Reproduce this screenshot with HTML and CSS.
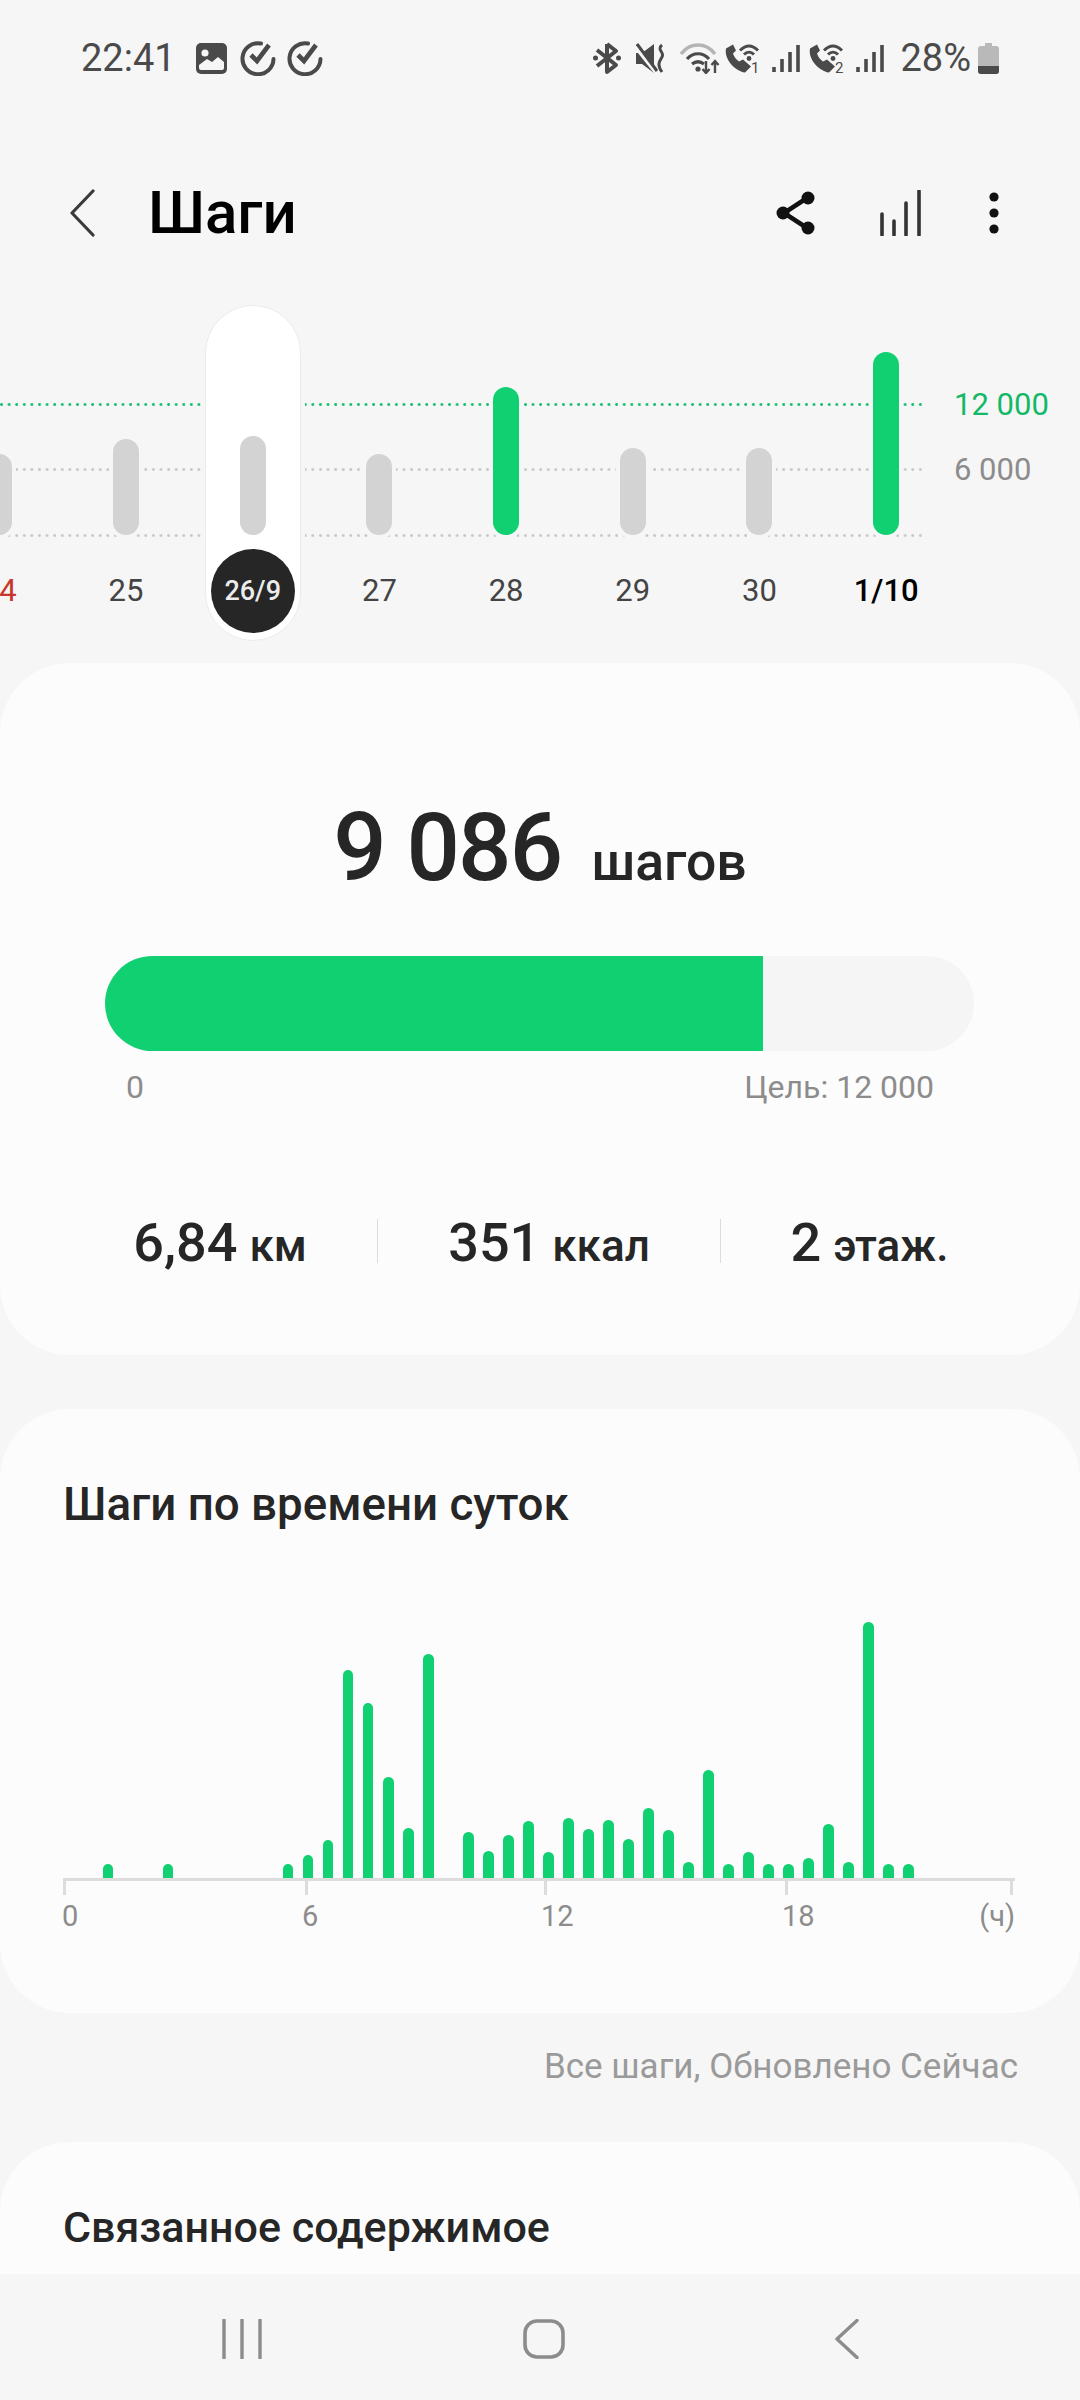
FILE: index.html
```html
<!DOCTYPE html>
<html lang="ru">
<head>
<meta charset="utf-8">
<title>Шаги</title>
<link rel="stylesheet" href="styles.css">
</head>
<body>
<div class="app">
  <div class="status">
    <span class="clock">22:41</span>
    <svg class="si si-img" viewBox="0 0 31 31"><rect x="0" y="0" width="31" height="31" rx="5" fill="#4a4a4a"/><circle cx="9" cy="10" r="3.6" fill="#f6f6f6"/><path d="M3 25v-3l8-6 5 3 6-5 6 5v6a2 2 0 0 1-2 2H5a2 2 0 0 1-2-2z" fill="#f6f6f6"/></svg>
    <svg class="si si-chk" viewBox="0 0 36 36"><path d="M21 3.500A15.500 15.500 0 1 0 33.500 19" fill="none" stroke="#4a4a4a" stroke-width="4" stroke-linecap="round"/><path d="M11 15l6 6L29 5" fill="none" stroke="#4a4a4a" stroke-width="4.600"/></svg>
    <svg class="si si-chk" viewBox="0 0 36 36"><path d="M21 3.500A15.500 15.500 0 1 0 33.500 19" fill="none" stroke="#4a4a4a" stroke-width="4" stroke-linecap="round"/><path d="M11 15l6 6L29 5" fill="none" stroke="#4a4a4a" stroke-width="4.600"/></svg>
    <span class="status-gap"></span>
    <svg class="si si-bt" viewBox="0 0 28 32"><path d="M14 2v28l9-7L4 8M14 2l9 7L4 24" fill="none" stroke="#4a4a4a" stroke-width="4" stroke-linejoin="round"/><circle cx="2.500" cy="16" r="2.500" fill="#4a4a4a"/><circle cx="25.500" cy="16" r="2.500" fill="#4a4a4a"/></svg>
    <svg class="si si-mute" viewBox="0 0 29 31"><path d="M0 10h6l12-9v29L6 21H0z" fill="#4a4a4a"/><path d="M0 4l20 25" stroke="#f6f6f6" stroke-width="4.500"/><path d="M1 1l20 27" stroke="#4a4a4a" stroke-width="3"/><path d="M26 2c-6 5 3 7 0 12s-5 8 0 15" fill="none" stroke="#4a4a4a" stroke-width="3"/></svg>
    <svg class="si si-wifi" viewBox="0 0 40 31"><path d="M1 11C10 -1 26 -1 35 11" fill="none" stroke="#b5b5b5" stroke-width="3.400"/><path d="M7 16C13 9 23 9 29 16M12 21c4-3 8-3 12 0" fill="none" stroke="#4a4a4a" stroke-width="3.200"/><circle cx="18" cy="26" r="2.600" fill="#4a4a4a"/><path d="M26 18v12M22.500 26l3.500 4 3.500-4M35 30V18M31.500 22l3.500-4 3.500 4" fill="none" stroke="#4a4a4a" stroke-width="2.400"/></svg>
    <svg class="si si-call" viewBox="0 -2.500 36 36"><path d="M8 2L1 6c-2 10 8 22 19 24l6-6-8-7-4 2c-3-2-5-5-6-8l3-3z" fill="#4a4a4a"/><path d="M15 8c6-6 12-6 18 0M19 12c3-3 7-3 10 0" fill="none" stroke="#4a4a4a" stroke-width="3"/><circle cx="24" cy="16" r="2.400" fill="#4a4a4a"/><text class="sim" x="26" y="30">1</text></svg>
    <svg class="si si-sig" viewBox="0 0 28 29"><path d="M2 23v5M10 15v13M18 8v20M26 1v27" fill="none" stroke="#4a4a4a" stroke-width="3.600"/></svg>
    <svg class="si si-call si-call2" viewBox="0 -2.500 36 36"><path d="M8 2L1 6c-2 10 8 22 19 24l6-6-8-7-4 2c-3-2-5-5-6-8l3-3z" fill="#4a4a4a"/><path d="M15 8c6-6 12-6 18 0M19 12c3-3 7-3 10 0" fill="none" stroke="#4a4a4a" stroke-width="3"/><circle cx="24" cy="16" r="2.400" fill="#4a4a4a"/><text class="sim" x="26" y="30">2</text></svg>
    <svg class="si si-sig si-sig2" viewBox="0 0 28 29"><path d="M2 23v5M10 15v13M18 8v20M26 1v27" fill="none" stroke="#4a4a4a" stroke-width="3.600"/></svg>
    <span class="pct">28%</span>
    <svg class="si si-batt" viewBox="0 0 21 31"><path d="M7 0h7v3h4a3 3 0 0 1 3 3v22a3 3 0 0 1-3 3H3a3 3 0 0 1-3-3V6a3 3 0 0 1 3-3h4z" fill="#b9b9b9"/><path d="M0 23h21v5a3 3 0 0 1-3 3H3a3 3 0 0 1-3-3z" fill="#4a4a4a"/></svg>
  </div>

  <div class="appbar">
    <svg class="back" viewBox="0 0 26 48"><path d="M24 2L3 24l21 22" fill="none" stroke="#3a3a3a" stroke-width="3.200" stroke-linecap="round" stroke-linejoin="round"/></svg>
    <h1 class="title">Шаги</h1>
    <span class="bar-gap"></span>
    <svg class="act act-share" viewBox="0 0 40 44"><path d="M31 7L8 22l23 15" fill="none" stroke="#111" stroke-width="4.500"/><circle cx="32" cy="7" r="6.500" fill="#111"/><circle cx="7" cy="22" r="6.500" fill="#111"/><circle cx="32" cy="37" r="6.500" fill="#111"/></svg>
    <svg class="act act-sig" viewBox="0 0 42 46"><path d="M3 24v21M15 31v14M27 13v32M40 1v44" fill="none" stroke="#333" stroke-width="3.600" stroke-linecap="round"/></svg>
    <svg class="act act-more" viewBox="0 0 12 44"><circle cx="6" cy="6" r="4.600" fill="#111"/><circle cx="6" cy="22" r="4.600" fill="#111"/><circle cx="6" cy="38" r="4.600" fill="#111"/></svg>
  </div>

  <main class="scroll">
    <section class="week">
      <div class="guide guide-goal"><span class="guide-label">12 000</span></div>
      <div class="guide guide-mid"><span class="guide-label">6 000</span></div>
      <div class="guide guide-base"></div>
      <div class="days">
        <div class="day day-sun"><div class="plot"><i class="dbar" style="height:81px"></i></div><span class="dlabel">24</span></div>
        <div class="day"><div class="plot"><i class="dbar" style="height:96px"></i></div><span class="dlabel">25</span></div>
        <div class="day day-sel"><span class="pill"></span><div class="plot"><i class="dbar" style="height:99px"></i></div><span class="dlabel">26/9</span></div>
        <div class="day"><div class="plot"><i class="dbar" style="height:81px"></i></div><span class="dlabel">27</span></div>
        <div class="day"><div class="plot"><i class="dbar dbar-goal" style="height:148px"></i></div><span class="dlabel">28</span></div>
        <div class="day"><div class="plot"><i class="dbar" style="height:87px"></i></div><span class="dlabel">29</span></div>
        <div class="day"><div class="plot"><i class="dbar" style="height:87px"></i></div><span class="dlabel">30</span></div>
        <div class="day day-today"><div class="plot"><i class="dbar dbar-goal" style="height:183px"></i></div><span class="dlabel">1/10</span></div>
      </div>
    </section>

    <section class="card card-summary">
      <div class="hero"><span class="hero-num">9 086</span><span class="hero-unit">шагов</span></div>
      <div class="progress"><div class="progress-fill" style="width:75.700%"></div></div>
      <div class="progress-labels"><span>0</span><span>Цель: 12 000</span></div>
      <div class="stats">
        <div class="stat"><b>6,84</b><span>км</span></div>
        <div class="stat"><b>351</b><span>ккал</span></div>
        <div class="stat"><b>2</b><span>этаж.</span></div>
      </div>
    </section>

    <section class="card card-hours">
      <h2 class="card-title card-title-hours">Шаги по времени суток</h2>
      <div class="hours">
        <i></i><i></i><i style="height:14px"></i><i></i><i></i><i style="height:14px"></i><i></i><i></i><i></i><i></i><i></i><i style="height:14px"></i><i style="height:23px"></i><i style="height:38px"></i><i style="height:208px"></i><i style="height:175px"></i><i style="height:101px"></i><i style="height:50px"></i><i style="height:224px"></i><i></i><i style="height:46px"></i><i style="height:27px"></i><i style="height:43px"></i><i style="height:57px"></i><i style="height:26px"></i><i style="height:60px"></i><i style="height:49px"></i><i style="height:58px"></i><i style="height:39px"></i><i style="height:70px"></i><i style="height:48px"></i><i style="height:16px"></i><i style="height:108px"></i><i style="height:14px"></i><i style="height:26px"></i><i style="height:14px"></i><i style="height:14px"></i><i style="height:20px"></i><i style="height:54px"></i><i style="height:16px"></i><i style="height:256px"></i><i style="height:14px"></i><i style="height:14px"></i>
      </div>
      <div class="axis"><i></i><i></i><i></i><i></i><i></i></div>
      <div class="axis-labels"><span>0</span><span>6</span><span>12</span><span>18</span><span>(ч)</span></div>
    </section>

    <p class="note">Все шаги, Обновлено Сейчас</p>

    <section class="card card-related">
      <h2 class="card-title">Связанное содержимое</h2>
    </section>
  </main>

  <nav class="nav">
    <svg class="nav-recent" viewBox="0 0 40 40"><path d="M2 1v38M20 1v38M38 1v38" fill="none" stroke="#8c8c8c" stroke-width="3.400" stroke-linecap="round"/></svg>
    <svg class="nav-home" viewBox="0 0 42 40"><rect x="2" y="2" width="38" height="36" rx="12" fill="none" stroke="#8c8c8c" stroke-width="3.600"/></svg>
    <svg class="nav-back" viewBox="0 0 24 40"><path d="M22 1.500L2 20l20 18.500" fill="none" stroke="#8c8c8c" stroke-width="3.400" stroke-linecap="round" stroke-linejoin="round"/></svg>
  </nav>
</div>
</body>
</html>
```

FILE: styles.css
```css
* { box-sizing: border-box; }
html, body { margin: 0; padding: 0; }
body { width: 1080px; height: 2400px; background: #f6f6f6; font-family: Roboto, "Noto Sans", sans-serif; overflow: hidden; }
.app { width: 1080px; height: 2400px; display: flex; flex-direction: column; }

/* status bar */
.status { flex: none; height: 114px; padding: 2px 81px 0 81px; display: flex; align-items: center; color: #4a4a4a; }
.clock { font-size: 38px; line-height: 40px; margin-right: 20px; }
.si { display: block; flex: none; }
.si-img { width: 31px; height: 31px; margin-right: 13px; }
.si-chk { width: 36px; height: 36px; margin-right: 11px; }
.status-gap { flex: 1; }
.si-bt { width: 28px; height: 32px; margin-right: 15px; }
.si-mute { width: 29px; height: 31px; margin-right: 15px; }
.si-wifi { width: 40px; height: 31px; margin-right: 5px; }
.si-call { width: 36px; height: 36px; margin-right: 11px; }
.si-sig { width: 28px; height: 29px; margin-right: 9px; }
.si-sig2 { margin-right: 16px; }
.sim { font: 400 15px Roboto, sans-serif; fill: #4a4a4a; }
.pct { font-size: 38px; line-height: 40px; margin-right: 7px; }
.si-batt { width: 21px; height: 31px; }

/* app bar */
.appbar { flex: none; height: 191px; padding: 7px 80px 0 69px; display: flex; align-items: center; }
.back { width: 26px; height: 48px; flex: none; margin-right: 53px; }
.title { margin: 0; font-size: 60px; line-height: 66px; font-weight: 500; color: #000; }
.bar-gap { flex: 1; }
.act { display: block; flex: none; }
.act-share { width: 40px; height: 44px; margin-right: 63px; }
.act-sig { width: 42px; height: 46px; margin-right: 67px; }
.act-more { width: 12px; height: 44px; }

/* scroll area */
.scroll { flex: 1; min-height: 0; overflow: hidden; }

/* week chart */
.week { position: relative; height: 358px; overflow: hidden; }
.guide { position: absolute; left: 0; width: 923px; height: 3px; background-size: 7.6px 3px; background-repeat: repeat-x; }
.guide-goal { top: 98px; background-image: radial-gradient(circle at 1.5px 1.5px, #17c06f 1.2px, transparent 1.6px); }
.guide-mid { top: 163px; background-image: radial-gradient(circle at 1.5px 1.5px, #c9c9c9 1.2px, transparent 1.6px); }
.guide-base { top: 229px; background-image: radial-gradient(circle at 1.5px 1.5px, #c9c9c9 1.2px, transparent 1.6px); }
.guide-label { position: absolute; left: 954px; top: -18px; font-size: 31px; line-height: 40px; white-space: nowrap; }
.guide-goal .guide-label { color: #13b968; }
.guide-mid .guide-label { color: #8c8c8c; }
.days { position: relative; display: flex; margin-left: -64px; }
.day { position: relative; flex: none; width: 126.700px; display: flex; flex-direction: column; align-items: center; }
.plot { position: relative; height: 230px; display: flex; align-items: flex-end; }
.dbar { display: block; width: 26px; border-radius: 13px; background: #d3d3d3; box-shadow: 0 0 0 4px #f6f6f6; }
.dbar-goal { background: #11d072; }
.dlabel { position: relative; margin-top: 36px; width: 84px; text-align: center; font-size: 31px; line-height: 40px; color: #444; white-space: nowrap; }
.day-sun .dlabel { color: #c8372d; }
.day-today .dlabel { color: #000; font-weight: 500; }
.pill { position: absolute; left: 15.350px; top: 0; width: 96px; height: 336px; border-radius: 48px; background: #fff; border: 1px solid #ebebeb; box-shadow: 0 0 0 4px #f6f6f6; }
.day-sel .dbar { box-shadow: none; }
.day-sel .dlabel { margin-top: 14px; height: 84px; border-radius: 50%; background: #262626; color: #ececec; font-size: 27px; font-weight: 500; line-height: 84px; }

/* cards */
.card { background: #fcfcfc; border-radius: 70px; }
.card-summary { height: 692px; padding-top: 130px; }
.hero { display: flex; justify-content: center; align-items: baseline; height: 110px; line-height: 110px; color: #262626; }
.hero-num { font-size: 94px; font-weight: 500; letter-spacing: -1.8px; margin-right: 30px; }
.hero-unit { font-size: 53.500px; font-weight: 500; }
.progress { margin: 53px 106px 0 105px; height: 95px; border-radius: 48px; background: #f5f5f5; overflow: hidden; }
.progress-fill { height: 100%; background: #11d072; }
.progress-labels { margin: 16px 146px 0 126px; display: flex; justify-content: space-between; font-size: 32px; line-height: 40px; color: #8c8c8c; }
.stats { margin: 112px 62px 0 63px; display: grid; grid-template-columns: 314px 343px 1fr; }
.stat { height: 44px; display: flex; justify-content: center; align-items: baseline; line-height: 48px; color: #262626; }
.stat + .stat { border-left: 1px solid #dcdcdc; }
.stat b { font-size: 54px; font-weight: 500; margin-right: 12px; }
.stat span { font-size: 44px; font-weight: 500; }
.card-title { margin: 0; font-size: 43px; line-height: 54px; font-weight: 500; color: #262626; padding-left: 63px; }
.card-title-hours { font-size: 45.700px; padding-left: 63px; }
.card-hours { margin-top: 54px; height: 604px; padding-top: 69px; }
.hours { margin: 76px 0 0 58px; height: 270px; display: grid; grid-template-columns: repeat(48, 20.020px); align-items: end; }
.hours i { display: block; justify-self: center; width: 10.500px; border-radius: 5.250px 5.250px 0 0; background: #11d072; }
.axis { margin: 0 65px 0 63px; height: 17px; border-top: 3px solid #dcdcdc; display: grid; grid-template-columns: 242px 239px 241px 225px 1fr; }
.axis i { display: block; width: 3px; height: 14px; background: #dcdcdc; }
.axis-labels { margin: 3px 65px 0 62px; display: grid; grid-template-columns: 240px 239px 241px 1fr auto; font-size: 29px; line-height: 36px; color: #8c8c8c; }
.note { margin: 0; height: 129px; padding: 34px 62px 0 0; text-align: right; font-size: 35px; line-height: 40px; color: #9a9a9a; }
.card-related { height: 200px; padding-top: 58px; border-radius: 70px 70px 0 0; }

/* navigation */
.nav { flex: none; height: 126px; background: #f6f6f6; display: flex; align-items: flex-start; padding: 45px 0 0 222px; }
.nav-recent { display: block; width: 40px; height: 40px; margin-right: 261px; }
.nav-home { display: block; width: 42px; height: 40px; margin-right: 270px; }
.nav-back { display: block; width: 24px; height: 40px; }
```
